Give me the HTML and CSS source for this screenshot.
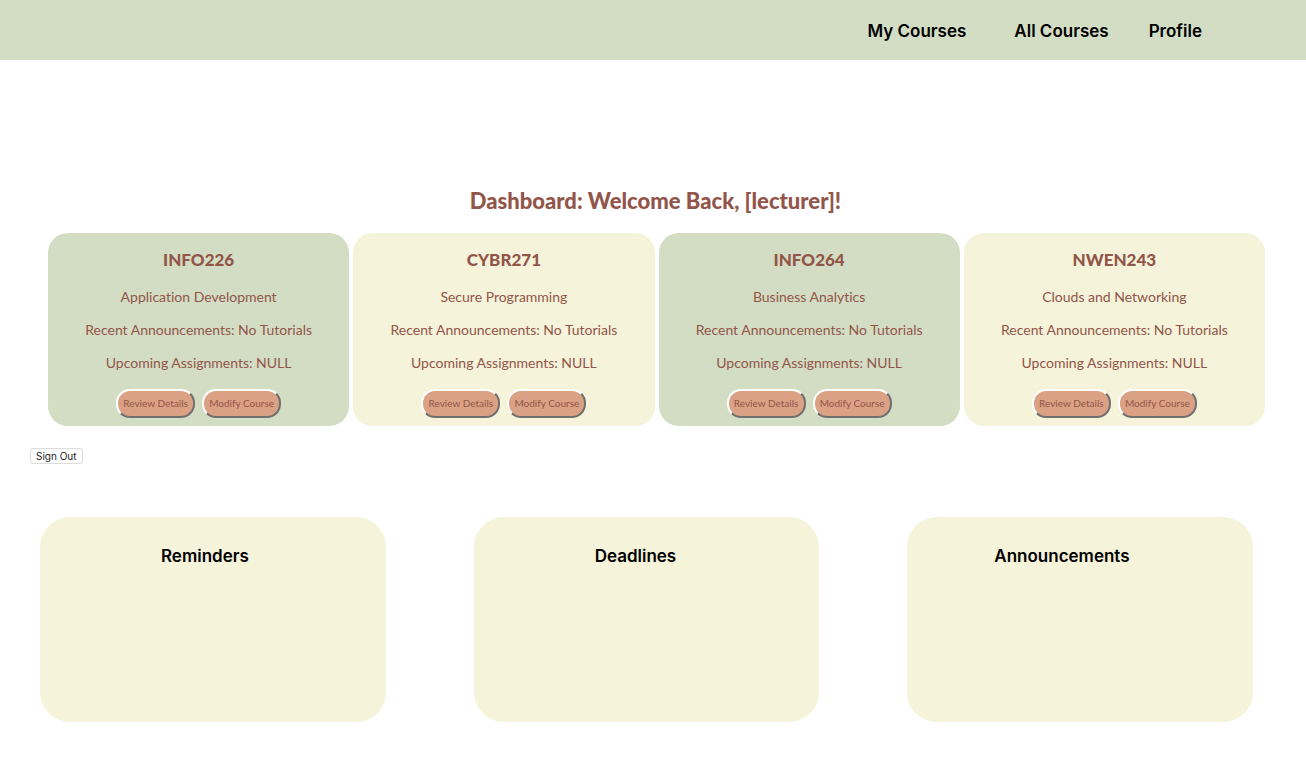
FILE: index.html
```html
<!DOCTYPE html>
<html lang="en">
<head>
<meta charset="utf-8">
<title>Dashboard</title>
<link rel="stylesheet" href="styles.css">
</head>
<body>
<header class="site-header">
  <nav class="site-nav">
    <a class="nav-link nav-link-first" href="#my-courses">My Courses</a>
    <a class="nav-link" href="#all-courses">All Courses</a>
    <a class="nav-link" href="#profile">Profile</a>
  </nav>
</header>
<main>
  <h1 class="welcome">Dashboard: Welcome Back, [lecturer]!</h1>
  <section class="courses" id="my-courses">
    <article class="course course-green">
      <h2 class="course-code">INFO226</h2>
      <p class="course-line">Application Development</p>
      <p class="course-line">Recent Announcements: No Tutorials</p>
      <p class="course-line">Upcoming Assignments: NULL</p>
      <div class="course-actions">
        <button class="pill" type="button">Review Details</button>
        <button class="pill" type="button">Modify Course</button>
      </div>
    </article>
    <article class="course course-cream">
      <h2 class="course-code">CYBR271</h2>
      <p class="course-line">Secure Programming</p>
      <p class="course-line">Recent Announcements: No Tutorials</p>
      <p class="course-line">Upcoming Assignments: NULL</p>
      <div class="course-actions">
        <button class="pill" type="button">Review Details</button>
        <button class="pill" type="button">Modify Course</button>
      </div>
    </article>
    <article class="course course-green">
      <h2 class="course-code">INFO264</h2>
      <p class="course-line">Business Analytics</p>
      <p class="course-line">Recent Announcements: No Tutorials</p>
      <p class="course-line">Upcoming Assignments: NULL</p>
      <div class="course-actions">
        <button class="pill" type="button">Review Details</button>
        <button class="pill" type="button">Modify Course</button>
      </div>
    </article>
    <article class="course course-cream">
      <h2 class="course-code">NWEN243</h2>
      <p class="course-line">Clouds and Networking</p>
      <p class="course-line">Recent Announcements: No Tutorials</p>
      <p class="course-line">Upcoming Assignments: NULL</p>
      <div class="course-actions">
        <button class="pill" type="button">Review Details</button>
        <button class="pill" type="button">Modify Course</button>
      </div>
    </article>
  </section>
  <div class="session">
    <button class="sign-out" type="button">Sign Out</button>
  </div>
  <section class="panels">
    <article class="panel"><h2 class="panel-title">Reminders</h2></article>
    <article class="panel"><h2 class="panel-title">Deadlines</h2></article>
    <article class="panel panel-wide-title"><h2 class="panel-title">Announcements</h2></article>
  </section>
</main>
</body>
</html>
```

FILE: styles.css
```css
* { box-sizing: border-box; }

body {
  margin: 0;
  background: #fff;
  color: #000;
  font-family: Inter, "Liberation Sans", sans-serif;
}

h1, h2, p { margin: 0; }

.site-header { background: #d3ddc4; }

.site-nav {
  display: flex;
  justify-content: flex-end;
  gap: 40px;
  padding: 19px 104px 17px 40px;
}

.nav-link {
  color: #000;
  font-size: 17px;
  font-weight: 600;
  line-height: 24px;
  text-decoration: none;
}

.nav-link-first { margin-right: 8px; }

.welcome {
  padding: 125px 43px 17px 48px;
  color: #925549;
  font-family: Lato, sans-serif;
  font-size: 22px;
  font-weight: 900;
  line-height: 31px;
  text-align: center;
}

.courses {
  display: grid;
  grid-template-columns: repeat(4, 1fr);
  gap: 4px;
  padding: 0 41px 0 48px;
}

.course {
  padding: 15px 8px 8px;
  border-radius: 20px;
  color: #925549;
  font-family: Lato, sans-serif;
  font-variant-ligatures: none;
  text-align: center;
}

.course-green { background: #d3ddc4; }
.course-cream { background: #f5f3d9; }

.course-code {
  margin-bottom: 15px;
  font-size: 17px;
  font-weight: 900;
  line-height: 24px;
}

.course-line {
  margin-bottom: 13px;
  font-size: 14px;
  line-height: 20px;
}

.course-actions {
  display: flex;
  justify-content: center;
  gap: 7px;
  padding-top: 3px;
}

.pill {
  min-width: 79px;
  padding: 6px 4px;
  border: 2px solid;
  border-color: #fff #6f6f6f #6f6f6f #fff;
  border-radius: 14px;
  background: #dba184;
  color: #925549;
  font-family: Lato, sans-serif;
  font-size: 10px;
  line-height: 13px;
}

.session {
  display: flex;
  padding: 22px 30px 53px;
}

.sign-out {
  padding: 0 5px;
  border: 1px solid #dcdcdc;
  border-radius: 3px;
  background: #fff;
  color: #222;
  font-family: Inter, sans-serif;
  font-size: 10px;
  line-height: 14px;
}

.panels {
  display: grid;
  grid-template-columns: repeat(3, 1fr);
  gap: 88px;
  padding: 0 53px 36px 40px;
}

.panel {
  min-height: 205px;
  padding: 27px 20px 27px 121px;
  border-radius: 30px;
  background: #f5f3d9;
}

.panel-wide-title { padding-left: 87px; }

.panel-title {
  font-size: 17px;
  font-weight: 600;
  line-height: 24px;
}
```
